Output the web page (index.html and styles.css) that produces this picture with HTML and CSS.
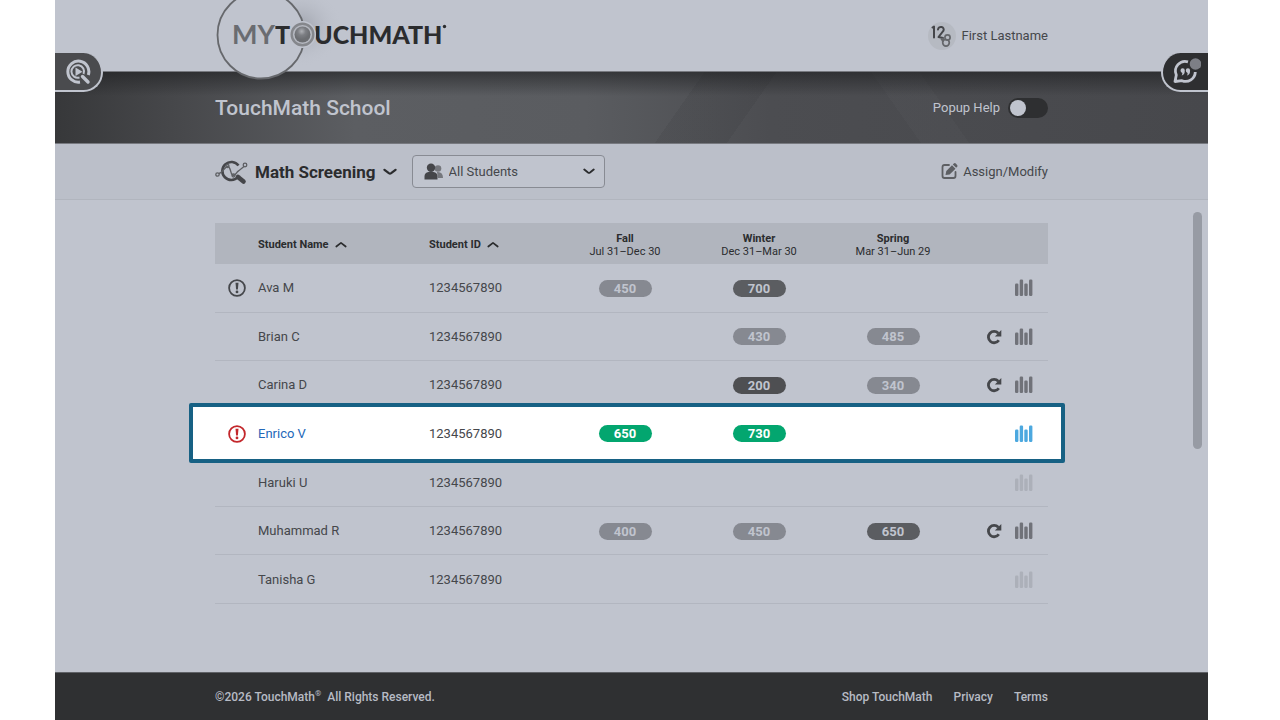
FILE: index.html
```html
<!DOCTYPE html>
<html lang="en">
<head>
<meta charset="utf-8">
<title>MyTouchMath - Math Screening</title>
<link rel="stylesheet" href="styles.css">
</head>
<body>
<svg class="defs" aria-hidden="true">
  <symbol id="bars" viewBox="0 0 18 18"><rect x="0" y="4.500" width="3.400" height="12.500" rx="1.200"/><rect x="4.700" y="0.500" width="3.400" height="16.500" rx="1.200"/><rect x="9.300" y="4.500" width="3.400" height="12.500" rx="1.200"/><rect x="14" y="0.500" width="3.400" height="16.500" rx="1.200"/></symbol>
  <symbol id="redo" viewBox="0 0 16 16"><path d="M12.800 11.300A5.700 5.700 0 1 1 12.300 4.200" fill="none" stroke="currentColor" stroke-width="2.800"/><path d="M15.300 1v6.400H8.900z"/></symbol>
  <symbol id="alert" viewBox="0 0 18 18"><circle cx="9" cy="9" r="7.900" fill="none" stroke="currentColor" stroke-width="1.800"/><path d="M7.500 3.800h3l-.6 6.600H8.100z"/><circle cx="9" cy="12.900" r="1.400"/></symbol>
  <symbol id="down" viewBox="0 0 14 8"><path d="M1.500 1.800L5.800 5.200Q7 6 8.200 5.200L12.500 1.800" fill="none" stroke="currentColor" stroke-width="2.200" stroke-linecap="round"/></symbol>
  <symbol id="up" viewBox="0 0 12 7"><path d="M1.300 5.500L6 1.800l4.700 3.700" fill="none" stroke="currentColor" stroke-width="1.700" stroke-linecap="round" stroke-linejoin="round"/></symbol>
</svg>
<div class="app">
  <header class="header">
    <a class="logo" href="#" aria-label="MyTouchMath">
      <svg width="240" height="82" viewBox="0 0 240 82">
        <defs>
          <radialGradient id="shade"><stop offset="0" stop-color="#868a93" stop-opacity=".6"/><stop offset="1" stop-color="#c0c4ce" stop-opacity="0"/></radialGradient>
          <radialGradient id="ball" cx=".45" cy=".3"><stop offset="0" stop-color="#aeb0b5"/><stop offset=".5" stop-color="#7d7f84"/><stop offset="1" stop-color="#6c6e72"/></radialGradient>
        </defs>
        <ellipse cx="85" cy="27" rx="43" ry="40" fill="url(#shade)"/>
        <circle cx="46" cy="35" r="43.500" fill="#c0c4ce" stroke="#66686c" stroke-width="1.800"/>
        <text class="logo-my" x="17" y="44">MY</text>
        <text class="logo-name" x="60" y="44">T</text>
        <text class="logo-name" x="99" y="44">UCHMATH</text>
        <circle cx="87.500" cy="34.500" r="13.500" fill="#c0c4ce"/>
        <circle cx="87.500" cy="34.500" r="10.800" fill="#b5b8c0" stroke="#85878c" stroke-width="2.400"/>
        <circle cx="87.500" cy="34.500" r="8" fill="url(#ball)"/>
        <circle cx="229.500" cy="26.500" r="1.700" fill="#2b2c2e"/>
      </svg>
    </a>
    <a class="user" href="#">
      <svg width="28" height="28" viewBox="0 0 28 28"><circle cx="14" cy="14" r="14" fill="#b6bac2"/><g fill="none" stroke="#45464a" stroke-linecap="round" stroke-linejoin="round"><path d="M4.500 5.500L6 4.500v11" stroke-width="2"/><path d="M10 7.500c.5-4 7-3 5.500 1.200L10.500 15l4.500 1" stroke-width="2"/><g stroke="#65676b" stroke-width="1.700"><circle cx="19.500" cy="15.500" r="2.600"/><circle cx="18" cy="20.800" r="3.300"/><path d="M13.500 17.500c1-2 3 0 1 1.500"/></g></g></svg>
      <span>First Lastname</span>
    </a>
    <button class="tab tab-left" aria-label="Find videos">
      <svg width="26" height="26" viewBox="0 0 26 26"><path d="M15 23A10.500 10.500 0 1 1 23.300 16" fill="none" stroke="currentColor" stroke-width="3"/><path d="M14.500 18.500A6.300 6.300 0 1 1 18.500 15" fill="none" stroke="currentColor" stroke-width="2"/><path d="M10.500 8.500v8.500l7-4.200z" fill="currentColor"/><path d="M17.500 17.500l5.500 5.500" stroke="currentColor" stroke-width="3.400" stroke-linecap="round"/></svg>
    </button>
    <button class="tab tab-right" aria-label="Messages">
      <svg width="30" height="30" viewBox="0 0 30 30"><path d="M17 4.800A9.700 9.700 0 0 0 5.300 18L4 24.500l7-.8A9.700 9.700 0 0 0 24.300 15" fill="none" stroke="currentColor" stroke-width="2.800" stroke-linejoin="round"/><path d="M9.500 13.500a2.100 2.100 0 1 1 4.300 0q0 4.500-3.300 5 1-1 .8-2.600-1.800-.4-1.800-2.400zm5.300 0a2.100 2.100 0 1 1 4.300 0q0 4.500-3.300 5 1-1 .8-2.600-1.800-.4-1.800-2.400z" fill="currentColor"/><circle cx="24.500" cy="7" r="5.800" fill="#7d7f86"/></svg>
    </button>
  </header>

  <section class="hero">
    <h1>TouchMath School</h1>
    <label class="help"><span>Popup Help</span><input type="checkbox" class="toggle"></label>
  </section>

  <nav class="toolbar">
    <button class="screening">
      <svg width="33" height="26" viewBox="0 0 33 26"><path d="M23.500 6.500A9 9 0 1 0 23 18" fill="none" stroke="#45464a" stroke-width="2.600"/><path d="M23 18l5.500 4.500" stroke="#45464a" stroke-width="4.600" stroke-linecap="round"/><g fill="none" stroke="#5d5f63" stroke-width="1.300"><path d="M4 14.500C8 13.500 10 7 13 7.500s2.500 9.500 5.500 9 3-4 5-4.500l5.500-4.500"/><circle cx="2.500" cy="15.500" r="1.700"/><circle cx="12.500" cy="7" r="1.500"/><circle cx="18.500" cy="16.500" r="1.500"/><circle cx="30" cy="6" r="1.800"/></g></svg>
      <span>Math Screening</span>
      <svg class="chev" width="14" height="8"><use href="#down"/></svg>
    </button>
    <div class="filter">
      <svg class="people" width="20" height="18" viewBox="0 0 20 18"><g fill="#75777d"><circle cx="14" cy="5.500" r="3.300"/><path d="M13 9q6-.5 6 6h-5z"/></g><g fill="#45464a"><circle cx="7" cy="4.700" r="4.200"/><path d="M.5 16.500v-3q0-4 4-4.500h5q4 .5 4 4.500v3z"/></g></svg>
      <select aria-label="Student group"><option>All Students</option></select>
      <svg class="caret" width="12" height="7" viewBox="0 0 14 8"><use href="#down"/></svg>
    </div>
    <button class="assign">
      <svg width="17" height="17" viewBox="0 0 17 17"><path d="M8 2H3.500Q1.500 2 1.500 4v9q0 2 2 2h9q2 0 2-2V9" fill="none" stroke="#5d5f63" stroke-width="1.800" stroke-linecap="round"/><path d="M4.500 12l.8-4L11 2.300l3.500 3.400L8.600 11.500zM11.800 1.500l1-1q1-.8 2 0l1.300 1.400q.8 1 0 1.900l-.9 1z" fill="#5d5f63"/></svg>
      <span>Assign/Modify</span>
    </button>
  </nav>

  <main class="main">
    <table class="students">
      <colgroup><col class="c-flag"><col class="c-name"><col class="c-id"><col class="c-term"><col class="c-term"><col class="c-term"><col></colgroup>
      <thead>
        <tr>
          <th></th>
          <th class="left"><button class="sort">Student Name <svg width="12" height="7"><use href="#up"/></svg></button></th>
          <th class="left"><button class="sort">Student ID <svg width="12" height="7"><use href="#up"/></svg></button></th>
          <th>Fall<small>Jul 31–Dec 30</small></th>
          <th>Winter<small>Dec 31–Mar 30</small></th>
          <th>Spring<small>Mar 31–Jun 29</small></th>
          <th></th>
        </tr>
      </thead>
      <tbody>
        <tr><td class="flag"><svg width="18" height="18"><use href="#alert"/></svg></td><td><a href="#">Ava M</a></td><td>1234567890</td><td class="term"><span class="score">450</span></td><td class="term"><span class="score mid">700</span></td><td></td><td class="actions"><div><svg class="bars" width="18" height="18"><use href="#bars"/></svg></div></td></tr>
        <tr><td></td><td><a href="#">Brian C</a></td><td>1234567890</td><td></td><td class="term"><span class="score">430</span></td><td class="term"><span class="score">485</span></td><td class="actions"><div><svg width="16" height="16"><use href="#redo"/></svg><svg class="bars" width="18" height="18"><use href="#bars"/></svg></div></td></tr>
        <tr><td></td><td><a href="#">Carina D</a></td><td>1234567890</td><td></td><td class="term"><span class="score dark">200</span></td><td class="term"><span class="score">340</span></td><td class="actions"><div><svg width="16" height="16"><use href="#redo"/></svg><svg class="bars" width="18" height="18"><use href="#bars"/></svg></div></td></tr>
        <tr class="spotlight"><td class="flag"><svg width="18" height="18"><use href="#alert"/></svg></td><td><a href="#">Enrico V</a></td><td>1234567890</td><td class="term"><span class="score">650</span></td><td class="term"><span class="score">730</span></td><td></td><td class="actions"><div><svg class="bars" width="18" height="18"><use href="#bars"/></svg></div></td></tr>
        <tr><td></td><td><a href="#">Haruki U</a></td><td>1234567890</td><td></td><td></td><td></td><td class="actions"><div><svg class="bars off" width="18" height="18"><use href="#bars"/></svg></div></td></tr>
        <tr><td></td><td><a href="#">Muhammad R</a></td><td>1234567890</td><td class="term"><span class="score">400</span></td><td class="term"><span class="score">450</span></td><td class="term"><span class="score mid">650</span></td><td class="actions"><div><svg width="16" height="16"><use href="#redo"/></svg><svg class="bars" width="18" height="18"><use href="#bars"/></svg></div></td></tr>
        <tr><td></td><td><a href="#">Tanisha G</a></td><td>1234567890</td><td></td><td></td><td></td><td class="actions"><div><svg class="bars off" width="18" height="18"><use href="#bars"/></svg></div></td></tr>
      </tbody>
    </table>
    <div class="scrollbar"></div>
  </main>

  <footer class="footer">
    <span>©2026 TouchMath<sup>®</sup>&nbsp; All Rights Reserved.</span>
    <nav><a href="#">Shop TouchMath</a><a href="#">Privacy</a><a href="#">Terms</a></nav>
  </footer>
</div>
</body>
</html>
```

FILE: styles.css
```css
* { box-sizing: border-box; }

body {
  margin: 0;
  padding: 0 72px 0 55px;
  background: #fff;
  color: #45474b;
  font: 13px/16px Roboto, "Liberation Sans", sans-serif;
}

svg { display: block; fill: currentColor; flex: none; }
.defs { position: absolute; width: 0; height: 0; }
a { color: inherit; text-decoration: none; }
button {
  padding: 0;
  border: 0;
  background: none;
  color: inherit;
  font: inherit;
}

.app {
  display: flex;
  flex-direction: column;
  min-height: 100vh;
  background: #c0c4ce;
}

.header {
  position: relative;
  z-index: 1;
  display: flex;
  justify-content: space-between;
  align-items: center;
  height: 72px;
  padding: 0 160px;
  background: #c0c4ce;
  border-bottom: 1px solid #77797f;
}
.logo { position: absolute; top: 0; left: 160px; }
.logo-my, .logo-name { font: 900 25px Lato, sans-serif; fill: #2b2c2e; }
.logo-my { font-size: 27px; fill: #6a6c71; font-weight: 700; }
.user {
  display: flex;
  align-items: center;
  gap: 5px;
  margin-left: auto;
}

.tab {
  position: absolute;
  top: 53px;
  display: flex;
  align-items: center;
  height: 39px;
  color: #c0c4ce;
}
.tab-left {
  left: 0;
  width: 48px;
  padding-left: 10px;
  background: #4a4b4e;
  border: solid #c0c4ce;
  border-width: 0 2px 2px 0;
  border-radius: 0 20px 20px 0;
}
.tab-right {
  right: 0;
  width: 47px;
  padding-left: 8px;
  background: #2e2f31;
  border: solid #c0c4ce;
  border-width: 0 0 2px 2px;
  border-radius: 20px 0 0 20px;
}

.hero {
  display: flex;
  justify-content: space-between;
  align-items: center;
  height: 72px;
  padding: 0 160px;
  color: #c0c4ce;
  background:
    linear-gradient(180deg, rgba(30, 31, 33, .6), rgba(30, 31, 33, 0) 24px),
    linear-gradient(125deg, transparent 54%, rgba(40, 41, 44, .1) 54% 60%, transparent 60%),
    linear-gradient(55deg, transparent 72%, rgba(110, 112, 118, .08) 72% 76%, transparent 76%),
    linear-gradient(90deg, #37383a 0, #46474a 10%, #5c5e62 26%, #5a5c60 46%, #4c4d51 62%, #47484c 100%);
  border-bottom: 1px solid #77797f;
}
.hero h1 { margin: 0; font-size: 21px; line-height: 28px; font-weight: 500; }
.help { display: flex; align-items: center; gap: 8px; }
.toggle {
  appearance: none;
  display: flex;
  align-items: center;
  width: 40px;
  height: 20px;
  margin: 0;
  padding: 0 2px;
  border-radius: 10px;
  background: #2e2f31;
}
.toggle::before {
  content: "";
  width: 16px;
  height: 16px;
  border-radius: 50%;
  background: #c0c4ce;
}
.toggle:checked { justify-content: flex-end; }

.toolbar {
  display: flex;
  align-items: center;
  height: 56px;
  padding: 0 160px;
  background: #bbbfc9;
  border-bottom: 1px solid #b1b5be;
}
.screening {
  display: flex;
  align-items: center;
  gap: 7px;
  color: #2b2c2e;
  font-size: 17px;
  line-height: 24px;
  font-weight: 700;
}
.filter { position: relative; width: 193px; margin-left: 15px; }
.filter select {
  appearance: none;
  display: block;
  width: 100%;
  height: 33px;
  padding: 0 30px 0 36px;
  border: 1px solid #888b93;
  border-radius: 4px;
  background: #c0c4ce;
  color: #45474b;
  font: inherit;
}
.people { position: absolute; top: 8px; left: 12px; pointer-events: none; }
.caret { position: absolute; top: 13px; right: 10px; color: #2b2c2e; pointer-events: none; }
.assign {
  display: flex;
  align-items: center;
  gap: 5px;
  margin-left: auto;
}

.main {
  display: grid;
  grid-template-columns: 160px 1fr 160px;
  align-items: start;
  flex: 1;
  padding: 12px 0;
}
.scrollbar {
  justify-self: end;
  width: 9px;
  height: 237px;
  margin-right: 6px;
  border-radius: 5px;
  background: #979ba4;
}
.students {
  grid-column: 2;
  width: 100%;
  height: 381px;
  margin-top: 11px;
  table-layout: fixed;
  border-collapse: separate;
  border-spacing: 0;
}
.c-flag { width: 43px; }
.c-name { width: 171px; }
.c-id { width: 129px; }
.c-term { width: 134px; }
th {
  height: 41px;
  padding: 2px 0 0;
  background: #b1b5be;
  color: #2b2c2e;
  font-size: 11px;
  line-height: 13px;
  font-weight: 700;
}
th small { display: block; font-size: 11px; font-weight: 400; }
.left { text-align: left; }
.sort { display: flex; align-items: center; gap: 6px; }
td { padding: 1px 0 0; border-bottom: 1px solid #b2b6c0; }
.flag svg { margin-left: 13px; }
.term { text-align: center; }
.score {
  display: block;
  width: 53px;
  margin: 0 auto;
  border-radius: 9px;
  background: #868991;
  color: #c0c4ce;
  line-height: 17px;
  font-weight: 700;
}
.score.mid { background: #5b5d61; }
.score.dark { background: #4e4f52; }
.actions div {
  display: flex;
  justify-content: flex-end;
  align-items: center;
  gap: 13px;
  padding-right: 15px;
}
.bars { color: #707279; }
.bars.off { color: #acb0b9; }

.spotlight { position: relative; z-index: 0; }
.spotlight td { border-color: transparent; }
.spotlight .flag::before {
  content: "";
  position: absolute;
  z-index: -1;
  inset: -7px -17px -5px -26px;
  border: 4px solid #176184;
  border-radius: 2px;
  background: #fff;
}
.spotlight .flag { color: #c3272b; }
.spotlight a { color: #2468b9; }
.spotlight .score { background: #03a66f; color: #fff; }
.spotlight .bars { color: #4ca8df; }

.footer {
  display: flex;
  justify-content: space-between;
  align-items: center;
  height: 48px;
  padding: 0 160px;
  background: #2f3032;
  border-top: 1px solid #5f6166;
  color: #b7bbc4;
  font-size: 12px;
  font-weight: 500;
}
.footer sup { font-size: 8px; line-height: 0; }
.footer nav { display: flex; gap: 21px; }
```
